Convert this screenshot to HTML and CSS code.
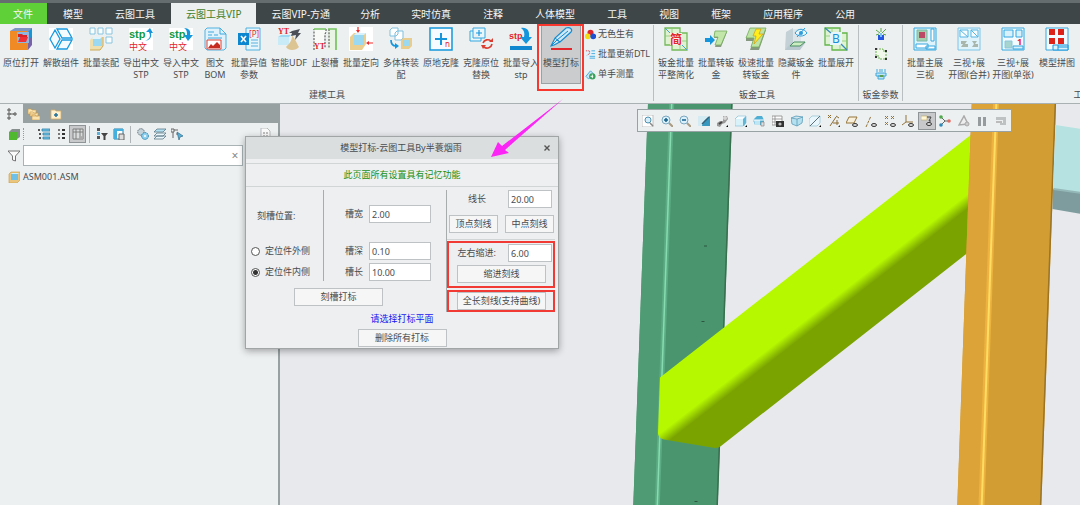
FILE: index.html
```html
<!DOCTYPE html>
<html lang="zh-CN">
<head>
<meta charset="utf-8">
<title>ASM001.ASM</title>
<link rel="stylesheet" href="styles.css">
</head>
<body>
<div class="app">
  <div class="titlebar"></div>
  <nav class="tabs">
    <button class="tab tab-file">文件</button>
    <button class="tab">模型</button>
    <button class="tab">云图工具</button>
    <button class="tab tab-active">云图工具VIP</button>
    <button class="tab tab-tight">云图VIP-方通</button>
    <button class="tab tab-tight">分析</button>
    <button class="tab">实时仿真</button>
    <button class="tab">注释</button>
    <button class="tab">人体模型</button>
    <button class="tab">工具</button>
    <button class="tab">视图</button>
    <button class="tab">框架</button>
    <button class="tab">应用程序</button>
    <button class="tab">公用</button>
  </nav>

  <div class="ribbon">
    <section class="group group-model">
      <div class="items">
        <button class="tool"><svg viewBox="0 0 24 24"><path d="M1 4l5-3h17l-4 4z" fill="#7d97c4"/><path d="M19 5l4-4v17l-4 5z" fill="#7a62a8"/><path d="M19 5l4-4v8l-4 5z" fill="#1596d6"/><path d="M1 4h18v19H1z" fill="#f08a24"/><path d="M8 5h12v11H8z" fill="#8fb8e0"/><path d="M9 7h4l1 1h4v2H9z" fill="#d8232a"/><path d="M11 10h8l-2 5H9z" fill="#ef3038"/></svg><span>原位打开</span></button>
        <button class="tool"><svg viewBox="0 0 24 24"><path fill="#fff" d="M0 1h24v22H0z"/><path d="M1 12l5-9 5 9-5 9zM8 2h10l5 9H13zM13 13h10l-5 9H8z" fill="#f4fbff" stroke="#1a9ae0" stroke-width="1.300"/></svg><span>解散组件</span></button>
        <button class="tool"><svg viewBox="0 0 24 24"><path d="M1 1h5v6H1zM9 1h5v6H9zM17 1h6v6h-6zM17 10h6v6h-6z" fill="#fafdff" stroke="#7dbfdd" stroke-width=".9"/><path d="M1 13l3-3h10v9l-3 4H1z" fill="#f0dfae"/><path d="M4 10h9v9H4z" fill="#9bd8f2"/><path d="M4 10h9l-2 2H3z" fill="#dff4fc"/><path d="M1 23h10l3-4v-9" fill="none" stroke="#cda958"/></svg><span>批量装配</span></button>
        <button class="tool"><svg viewBox="0 0 24 24"><path fill="#fff" d="M0 1h24v22H0z"/><text x="0" y="11" class="g-stp">stp</text><path d="M16 14c5-2 6-5 4-9h-3l4-4 3 5h-2c1 4-1 7-6 8z" fill="#1596dc"/><text x="0" y="23" class="g-zh">中文</text></svg><span>导出中文<br>STP</span></button>
        <button class="tool"><svg viewBox="0 0 24 24"><path fill="#fff" d="M0 1h24v22H0z"/><text x="0" y="11" class="g-stp">stp</text><path d="M15 1c5 0 7 3 6 7h3l-5 6-4-6h3c0-3 0-5-3-7z" fill="#1596dc"/><text x="0" y="23" class="g-zh">中文</text></svg><span>导入中文<br>STP</span></button>
        <button class="tool w28"><svg viewBox="0 0 24 24"><path d="M4 1h13l6 6v14l-2 2H4l-2-2V3z" fill="#dff2fb" stroke="#3fa8dc" stroke-width=".9"/><path d="M17 1v6h6M5 5h6M5 8h4M11 8h4M5 11h14" fill="none" stroke="#3fa8dc"/><path d="M4 13h14v9H4z" fill="#fff" stroke="#e04030"/><path d="M5 21l3-4 2 2 4-4 3 3v3z" fill="#c62c20"/></svg><span>图文<br>BOM</span></button>
        <button class="tool"><svg viewBox="0 0 24 24"><path d="M9 1h14v22H9z" fill="#e6f5fc" stroke="#3fa8dc" stroke-width=".9"/><path d="M14 13h7M14 16h7M14 19h7" stroke="#58b0dd"/><path d="M1 6h11v12H1z" fill="#0c86cf"/><path d="M4 9l5 6M9 9l-5 6" stroke="#fff" stroke-width="1.5"/><text x="12" y="10" class="g-red7">[P]</text></svg><span>批量异值<br>参数</span></button>
        <button class="tool"><svg viewBox="0 0 24 24"><path d="M1 10l3-2h10l-2 2v8H1z" fill="#9edaf4"/><path d="M1 10h11v8H1z" fill="#c9ebf8"/><path d="M15 9c2 0 5 8 7 11-3 4-11 4-13 0 3-3 6-6 6-11z" fill="#dcc493"/><path d="M15 4l8-2-2 4h3l-6 7 1-5-5 1 1-3h-3z" fill="#4a4e57"/><text x="1" y="7" class="g-yt">YT</text></svg><span>智能UDF</span></button>
        <button class="tool w32"><svg viewBox="0 0 24 24"><path d="M1 2h12v3l-2 2v13l2 2H1z" fill="#f7faf7"/><path d="M14 2h9v21h-9l1-2V7l-1-2z" fill="#e9f4e5"/><path d="M1 23V2M13 2v3l-1 2v14M16 2v19" fill="none" stroke="#444" stroke-dasharray="2 1.3"/><path d="M1 2h12M15 2h8v21" fill="none" stroke="#76c461" stroke-width="1.7"/><text x="1" y="22" class="g-yt">YT</text></svg><span>止裂槽</span></button>
        <button class="tool"><svg viewBox="0 0 24 24"><path fill="#fff" d="M0 0h24v24H0z"/><path d="M1 10l4-4h12v11l-4 6H1z" fill="#ebcf91"/><path d="M5 8h10v10H5z" fill="#9bd8f2"/><path d="M5 8l2-2h10l-2 2z" fill="#d9f2fb"/><path d="M9 0v5M24 16h-5" stroke="#ee2b2b" stroke-width="1.2"/><path d="M7 3h4L9 6zM20 14v4l-3-2z" fill="#ee2b2b"/></svg><span>批量定向</span></button>
        <button class="tool"><svg viewBox="0 0 24 24"><path d="M1 3l2-2h6v6L7 9H1zM6 6l2-2h6v7l-2 2H6z" fill="#fff" stroke="#7dbfdd"/><path d="M2 13c0 4 1 6 5 6" fill="none" stroke="#1596dc" stroke-width="1.7"/><path d="M6 16l4 3-4 3z" fill="#1596dc"/><path d="M12 13l2-2h9v8l-3 3h-8z" fill="#e8cd8e"/><path d="M14 13h7v6h-7z" fill="#9bd8f2"/></svg><span>多体转装<br>配</span></button>
        <button class="tool"><svg viewBox="0 0 24 24"><path d="M1 1h22v22H1z" fill="#f5fbff" stroke="#1596dc" stroke-width="1.5"/><path d="M6 12h12M12 6v12" stroke="#1596dc" stroke-width="2"/><text x="16" y="20" class="g-red7">n</text></svg><span>原地克隆</span></button>
        <button class="tool"><svg viewBox="0 0 24 24"><path d="M4 4H1v10h11v-3M4 1h12v10H4z" fill="#e9f7fd" stroke="#35a7df"/><path d="M7 6h6M10 3v6" stroke="#1596dc" stroke-width="1.2"/><path d="M14 16a5 5 0 0 1 8-2M23 17a5 5 0 0 1-8 3" fill="none" stroke="#dc3d31" stroke-width="1.6"/><path d="M20 15h4v-4zM12 18h5l-3 4z" fill="#dc3d31"/></svg><span>克隆原位<br>替换</span></button>
        <button class="tool"><svg viewBox="0 0 24 24"><text x="0" y="12" class="g-stp g-r">stp</text><path d="M12 1c6-1 9 3 8 9h3l-6 7-6-7h4c1-4 0-7-3-9z" fill="#1596dc"/><path d="M1 19h22v4H1z" fill="#1187d0"/></svg><span>批量导入<br>stp</span></button>
        <button class="tool tool-active"><svg viewBox="0 0 24 24"><path d="M2 19l4-8L17 1c4-1 7 1 5 4L11 15c-3 1-4 3-9 4z" fill="#cfe9f8" stroke="#168bd0" stroke-width="1.2"/><path d="M2 19l6-6 3 2M8 13L19 4M6 11l5 4" fill="none" stroke="#168bd0"/><path d="M2 22h21" stroke="#e3262c" stroke-width="2"/></svg><span>模型打标</span></button>
        <div class="mini-list">
          <button class="mini"><svg viewBox="0 0 12 12"><circle cx="6" cy="4" r="3.3" fill="#e0242a"/><circle cx="3" cy="8" r="3.2" fill="#f3dd10"/><circle cx="9" cy="8" r="3.2" fill="#2050cf"/></svg>无色生有</button>
          <button class="mini"><svg viewBox="0 0 12 12"><path d="M1 1h10v10H1z" fill="#e2f3fb"/><path d="M7 2h4M7 5h4M5 8h6M5 10h6" stroke="#45a8dc"/><path d="M1 2h4v3L2 7" fill="none" stroke="#e0242a" stroke-dasharray="1 1"/></svg>批量更新DTL</button>
          <button class="mini"><svg viewBox="0 0 12 12"><path d="M1 8l5-6 3 3-5 6z" fill="#c7e6f7" stroke="#42a6dc"/><circle cx="8" cy="8" r="3.5" fill="#38a05a"/><path d="M8 6v4M6 8h3" stroke="#fff"/></svg>单手测量</button>
        </div>
      </div>
      <h2 class="group-name">建模工具</h2>
    </section>

    <section class="group group-sheet">
      <div class="items">
        <button class="tool"><svg viewBox="0 0 24 24"><path d="M1 1h15v5h7v17H8v-5H1z" fill="#dff3d3" stroke="#73b95a" stroke-width="1.300"/><path d="M8 1v17M16 6v17M1 9h15M8 14h15" fill="none" stroke="#8cc877" stroke-width=".8"/><path d="M1 1l22 22" stroke="#4aa0d0"/><path d="M6 6h12v12H6z" fill="#f6f4ec"/><text x="6" y="17" class="g-jian">简</text></svg><span>钣金批量<br>平整简化</span></button>
        <button class="tool"><svg viewBox="0 0 24 24"><path d="M11 5h12l-6 15h-6l3-9h-4z" fill="#8a9a84"/><path d="M11 4h12l-6 14h-6l3-8h-4z" fill="#c2e6a9" stroke="#73ad5c" stroke-width=".8"/><path d="M1 11h5V8l5 5-5 5v-3H1z" fill="#1596dc"/></svg><span>批量转钣<br>金</span></button>
        <button class="tool"><svg viewBox="0 0 24 24"><path d="M6 3h16l-7 20H6l3-9H2v-3z" fill="#869880"/><path d="M6 1h16l-7 19H7l3-9H2z" fill="#bde3a5" stroke="#73ad5c" stroke-width=".8"/><path d="M12 2h5l-2 5h4l-9 10 2-8H9z" fill="#ffed1c" stroke="#d19a18" stroke-width=".7"/></svg><span>极速批量<br>转钣金</span></button>
        <button class="tool"><svg viewBox="0 0 24 24"><path d="M2 5l7-4v14l-6 8H1z" fill="#c3d0d6"/><path d="M9 2h8v13H9z" fill="#dde5e9"/><path d="M1 23l7-8h14l-6 8z" fill="#b9c8cf"/><path d="M6 19l4-4h11l-5 4z" fill="#caecc0" stroke="#4c8f66"/><path d="M11 6c3-5 9-5 12 0-3 4-9 4-12 0z" fill="#eaf7fe" stroke="#2d9cd8"/><circle cx="17" cy="6" r="2" fill="#2d9cd8"/><path d="M13 10l8-9" stroke="#2d9cd8"/></svg><span>隐藏钣金<br>件</span></button>
        <button class="tool"><svg viewBox="0 0 24 24"><path d="M1 1h15v5h7v17H8v-5H1z" fill="#dff3d3" stroke="#61b54a" stroke-width="1.300"/><path d="M8 1v5M16 18v5M1 9h5M18 14h5" stroke="#8cc877" stroke-width=".8"/><path d="M6 5h12v13H6z" fill="#e7f6fd"/><path d="M1 1l6 5M17 17l6 6" stroke="#3a88bc" stroke-width="1.3"/><text x="8" y="16" class="g-b">B</text></svg><span>批量展开</span></button>
      </div>
      <h2 class="group-name">钣金工具</h2>
    </section>

    <section class="group group-param">
      <div class="param-list">
        <button class="icon" aria-label="参数"><svg viewBox="0 0 12 12"><path d="M1 2l4 3M11 1L7 5M6 0v4M1 7l3-1M11 7L8 6" stroke="#5aa649"/><path d="M3 7h6v5H3z" fill="#2455e0"/><path d="M5 5h2v4H5z" fill="#78c1f0"/></svg></button>
        <button class="icon" aria-label="选择参数"><svg viewBox="0 0 12 12"><path d="M1 1h7v2h3v8H4V8H1z" fill="#f1faea" stroke="#6fb254" stroke-dasharray="2 1"/><path d="M0 0h2v2H0zM10 2h2v2h-2zM0 8h2v2H0zM10 10h2v2h-2z" fill="#333"/></svg></button>
        <button class="icon" aria-label="参数表"><svg viewBox="0 0 12 12"><path d="M1 5h10v3H1zM3 8h6v3H3z" fill="#bfe4f6" stroke="#3fa8dc"/><path d="M2 1v3M5 1v3M7 1v3M10 1v3" stroke="#3fa8dc"/><path d="M5 7h3v2H5z" fill="#5b9f4f"/></svg></button>
      </div>
      <h2 class="group-name">钣金参数</h2>
    </section>

    <section class="group group-draw">
      <div class="items">
        <button class="tool w44"><svg viewBox="0 0 24 24"><path d="M1 1h22v22H1z" fill="#dff3fc" stroke="#35a7df"/><path d="M4 3h10v11H4z" fill="#a6cfae" stroke="#7ba"/><path d="M6 5h6v6H6z" fill="#bb4a66"/><path d="M18 2h3v12h-3zM3 17h12v4H3zM13 19h9v3h-9z" fill="#fff" stroke="#35a7df"/></svg><span>批量主展<br>三视</span></button>
        <button class="tool w44"><svg viewBox="0 0 24 24"><path d="M1 1h22v22H1z" fill="#dff3fc" stroke="#7cc4e6"/><path d="M3 3h8v7H3zM14 3h7v7h-7z" fill="#f6fcff" stroke="#58b5e0"/><path d="M3 3l8 7M14 3l7 7" stroke="#58b5e0"/><path d="M4 14h6l-2 3h3v3H4l2-3H4zM15 14h5l-2 3h3v3h-6l2-3z" fill="#a9b6ab"/></svg><span>三视+展<br>开图(合并)</span></button>
        <button class="tool w44"><svg viewBox="0 0 24 24"><path d="M1 1h22v22H1z" fill="#f2fbff" stroke="#35a7df"/><path d="M3 3h9v7H3zM15 3h6v7h-6zM12 19h10v3H12z" fill="#d9f1fb" stroke="#35a7df"/><path d="M4 14h7v7H4z" fill="#a6d4cf" stroke="#8cc6dd"/><text x="16" y="18" class="g-one">1</text></svg><span>三视+展<br>开图(单张)</span></button>
        <button class="tool w44"><svg viewBox="0 0 24 24"><path d="M1 1h22v22H1z" fill="#f2fbff" stroke="#35a7df"/><path d="M4 2h6v6H4zM13 2h6v6h-6zM4 11h6v6H4zM13 11h6v6h-6z" fill="#dd2219"/><path d="M8 18h15v5H8zM13 18v5M13 20h10" fill="#d9f1fb" stroke="#1596dc"/></svg><span>模型拼图</span></button>
      </div>
      <h2 class="group-name">工具</h2>
    </section>
  </div>

  <main class="workspace">
    <aside class="sidebar">
      <div class="side-tabs">
        <button class="side-tab side-tab-active" aria-label="模型树"><svg viewBox="0 0 12 12" fill="none" stroke="#555"><path d="M2 1h2v2H2zM2 5h2v2H2zM2 9h2v2H2zM4 6h4M8 5h2v2H8z"/></svg></button>
        <button class="side-tab" aria-label="文件夹"><svg viewBox="0 0 12 12"><path d="M0 1h3l1 1h4v4H0zM2 4h3l1 1h4v3H2zM4 7h3l1 1h4v4H4z" fill="#fbe3b0" stroke="#c99a4c" stroke-width=".6"/></svg></button>
        <button class="side-tab" aria-label="收藏夹"><svg viewBox="0 0 12 12"><path d="M1 2h4l1 1h5v8H1z" fill="#fff0cf" stroke="#d3ad6a" stroke-width=".8"/><path d="M6 5v4M4 7h4" stroke="#23719b" stroke-width="1.500"/></svg></button>
      </div>
      <div class="side-tools">
        <button class="icon i17" aria-label="模型"><svg viewBox="0 0 12 12"><path d="M1 4l3-3h8v8l-3 2z" fill="#868e8e"/><path d="M1 4h8v8H1z" fill="#50b82e"/></svg></button>
        <span class="grip"></span>
        <button class="icon i17" aria-label="展开全部"><svg viewBox="0 0 12 12"><path d="M0 1h2v2H0zM1 5h2v2H1zM1 9h2v2H1z" fill="#555"/><path d="M4 1h8v2H4zM5 5h7v2H5zM5 9h7v2H5z" fill="#79c5e6" stroke="#247ea8" stroke-width=".8"/></svg></button>
        <button class="icon i17" aria-label="折叠全部"><svg viewBox="0 0 12 12"><path d="M3 1h2v2H3zM3 5h2v2H3zM3 9h2v2H3z" fill="#777"/><path d="M7 1h3v2H7zM7 5h3v2H7zM7 9h3v2H7z" fill="#333"/></svg></button>
        <button class="icon i17 pressed" aria-label="树列"><svg viewBox="0 0 12 12"><path d="M1 1h10v10H1zM1 4h10M4 1v10M8 1v10" fill="#d9dcdd" stroke="#777" stroke-width=".9"/><circle cx="9" cy="10" r="2" fill="#aaa"/></svg></button>
        <span class="rule"></span>
        <button class="icon i17" aria-label="树过滤器"><svg viewBox="0 0 12 12"><path d="M1 0h3v3H1zM1 8h3v3H1z" fill="#555"/><path d="M1 4h3v3H1z" fill="#58b0dd"/><path d="M5 5h7L9.500 8v4h-2V8z" fill="#444"/></svg></button>
        <button class="icon i17" aria-label="列"><svg viewBox="0 0 12 12"><path d="M1 1h9v10H1z" fill="#fff" stroke="#287da4"/><path d="M1 1h3v10H1zM4 1h6v2H4z" fill="#43b0df"/><path d="M6 6h5v6H6z" fill="#ddd" stroke="#666"/></svg></button>
        <span class="rule"></span>
        <button class="icon i17" aria-label="设置"><svg viewBox="0 0 12 12"><circle cx="4" cy="4" r="3.300" fill="#c5d3d9" stroke="#60717a" stroke-dasharray="1.500 .7"/><circle cx="8" cy="8" r="3.400" fill="#8ed0ee" stroke="#2980a8" stroke-dasharray="1.500 .7"/><circle cx="8" cy="8" r="1" fill="#fff"/></svg></button>
        <button class="icon i17" aria-label="层"><svg viewBox="0 0 12 12" fill="#e9f6fb" stroke="#5b7886" stroke-width=".8"><path d="M0 11l3-3h9l-3 3zM0 8l3-3h9L9 8z"/><path d="M0 4l3-3h9L9 4z" fill="#b3e1f4"/></svg></button>
        <button class="icon i17" aria-label="选择"><svg viewBox="0 0 12 12"><path d="M0 1h3v3H0zM3 2h4M2 4v6M5 6h3" fill="none" stroke="#666"/><path d="M6 4l6 4-3 1-1 3z" fill="#56b0d9" stroke="#356c86" stroke-width=".7"/></svg></button>
        <button class="icon i17 push" aria-label="报告"><svg viewBox="0 0 12 12"><path d="M2 0h6l3 3v9H2z" fill="#fafafa" stroke="#b5b9ba"/><path d="M4 5h2M7 5h2M4 8h2M7 8h2" stroke="#aaa" stroke-width="1.500"/></svg></button>
      </div>
      <div class="search">
        <svg class="funnel" viewBox="0 0 12 12"><path d="M0 1h12L7.500 6v5l-3-1V6z" fill="#fafafa" stroke="#666" stroke-width=".9"/></svg>
        <div class="search-box"><input type="text" aria-label="搜索模型树"><button class="clear" aria-label="清除">×</button></div>
      </div>
      <div class="tree-row"><svg viewBox="0 0 12 12"><path d="M1 3l2-2h9v8l-3 3H1z" fill="#e9c57d" stroke="#c69a45" stroke-width=".6"/><path d="M3 3h7v6H3z" fill="#6fc0e8"/><path d="M3 3l1-1h7l-1 1z" fill="#cdeefb"/></svg>ASM001.ASM</div>
    </aside>

    <section class="viewport">
      <svg class="scene" viewBox="280 104 800 401" preserveAspectRatio="xMidYMid slice">
        <defs>
          <linearGradient id="lime" gradientUnits="userSpaceOnUse" x1="811" y1="316" x2="818" y2="325"><stop offset="0" stop-color="#b6f800"/><stop offset="1" stop-color="#7aa300"/></linearGradient>
        </defs>
        <path d="M648 104h84.500L717.700 505h-84.400z" fill="#4b956e"/>
        <path d="M648 104h22L655.600 505h-22.300z" fill="#4f9c74"/>
        <path d="M671.700 104L657.300 505" stroke="#5cad85" stroke-width="5"/>
        <path d="M671.700 104L657.300 505" stroke="#86dcae" stroke-width="1.500"/>
        <path d="M731.800 104L717.200 505" stroke="#38704f" stroke-width="1.500"/>
        <path d="M704 246h3M701.500 321.500h3M694.500 501.500h3" stroke="#2b553f"/>
        <path d="M972 134L660 377.500L658 433Q658 438 664 439.600L715 448Q719 448 721 446L970 251z" fill="url(#lime)"/>
        <path d="M971.700 104H1056L1041.300 505h-84z" fill="#d29e33"/>
        <path d="M971.700 104h22L979 505h-21.700z" fill="#dba338"/>
        <path d="M996 104L981.500 505" stroke="#edb23f" stroke-width="6"/>
        <path d="M996.300 104L981.700 505" stroke="#ffdc62" stroke-width="2"/>
        <path d="M1055.300 104L1040.600 505" stroke="#9c7423" stroke-width="1.500"/>
        <path d="M1055.500 125L1082 129v64l-29-4z" fill="#b6e3e1"/>
        <path d="M1053 189l29 4v21l-29.500-5z" fill="#7e9c9d"/>
        <path d="M1053.500 189l28.500 4" stroke="#94b8b8" stroke-width="2"/>
      </svg>
      <div class="view-tools">
        <button class="icon" aria-label="重新调整"><svg viewBox="0 0 12 12"><path d="M0 0h11v12H0z" fill="#fff" stroke="#aaa" stroke-width=".7"/><circle cx="6" cy="5" r="3" fill="#d4effb" stroke="#4f91ae"/><path d="M8 8l3 3" stroke="#888" stroke-width="1.500"/></svg></button>
        <button class="icon" aria-label="放大"><svg viewBox="0 0 12 12"><path d="M8 8l4 4" stroke="#a99c83" stroke-width="2"/><circle cx="5" cy="5" r="4" fill="#d9f0fb" stroke="#7ba8bf"/><path d="M3 5h4M5 3v4" stroke="#155f8c" stroke-width="1.500"/></svg></button>
        <button class="icon" aria-label="缩小"><svg viewBox="0 0 12 12"><path d="M8 8l4 4" stroke="#a99c83" stroke-width="2"/><circle cx="5" cy="5" r="4" fill="#d9f0fb" stroke="#7ba8bf"/><path d="M3 5h4" stroke="#155f8c" stroke-width="1.500"/></svg></button>
        <button class="icon" aria-label="重画"><svg viewBox="0 0 12 12"><path d="M0 1h12v10H0z" fill="#3698be"/><path d="M0 1h12C8 4 5 6 4 11H0z" fill="#d5ebf3"/><path d="M4 9l7-7" stroke="#32617a" stroke-width="1.500"/></svg></button>
        <button class="icon" aria-label="渲染"><svg viewBox="0 0 12 12"><path d="M1 11V8l3-2h3V1h4l1 3-3 4-3 1-2 3z" fill="#999"/><circle cx="9" cy="3" r="2" fill="#d6d6d6"/><path d="M3 9l3-2" stroke="#444" stroke-width="2"/><path d="M12 12h-2l2-2z"/></svg></button>
        <button class="icon" aria-label="显示样式"><svg viewBox="0 0 12 12"><path d="M0 4l3-3h8v7l-2 3H0z" fill="#60b6d6"/><path d="M0 4h8v7H0z" fill="#d9f1f9"/><path d="M0 4l3-3h8L8 4z" fill="#f6fcff"/><path d="M0 11V4l3-3h8v7l-3 3z" fill="none" stroke="#7dbcd4" stroke-width=".6"/><path d="M12 12h-2l2-2z"/></svg></button>
        <button class="icon" aria-label="已保存方向"><svg viewBox="0 0 12 12"><path d="M0 5l4-4h5l2 4v5H2z" fill="#4faed3"/><path d="M1 5h6v5H2z" fill="#bfe5f3"/><path d="M0 5h11" stroke="#fff"/><path d="M8 7h3v4H8z" fill="#ddd" stroke="#888" stroke-width=".7"/></svg></button>
        <button class="icon" aria-label="视图管理器"><svg viewBox="0 0 12 12"><path d="M0 1h10v9H0zM0 4h10M3 1v9M0 7h4" fill="#fff" stroke="#888" stroke-width=".8"/><path d="M4 6h8v6H4z" fill="#333"/><circle cx="8" cy="9" r="1.600" fill="#bbb"/></svg></button>
        <button class="icon" aria-label="透视图"><svg viewBox="0 0 12 12"><path d="M0 3l5-2 7 1-1 6-5 3-5-2zM0 3l6 1 6-2M6 4v7" fill="#b5e0f0" stroke="#5a9db9" stroke-width=".8"/></svg></button>
        <button class="icon" aria-label="截面"><svg viewBox="0 0 12 12"><path d="M0 4l3-3h8v7l-3 3H0z" fill="#e9f7fc" stroke="#8ebfd1" stroke-width=".7"/><path d="M1 11L11 1" stroke="#5d6f77"/><path d="M12 12h-2l2-2z"/></svg></button>
        <button class="icon" aria-label="基准显示过滤器"><svg viewBox="0 0 12 12" stroke="#8b6b30" fill="none"><path d="M0 0l3 3M3 0L0 3M2 11L8 2M5 8h6M9 5v5M8 1l3 2"/><path d="M12 12h-2l2-2z" fill="#333" stroke="none"/></svg></button>
        <button class="icon" aria-label="平面显示"><svg viewBox="0 0 12 12"><path d="M3 2h8L8 8H0z" fill="#f8f0da" stroke="#93743b"/><ellipse cx="9" cy="10" rx="2.500" ry="1.500" fill="#ddd" stroke="#333"/></svg></button>
        <button class="icon" aria-label="轴显示"><svg viewBox="0 0 12 12"><path d="M1 12L6 1" stroke="#93743b" stroke-dasharray="3 1"/><ellipse cx="9" cy="10" rx="2.500" ry="1.500" fill="#ddd" stroke="#333"/></svg></button>
        <button class="icon" aria-label="点显示"><svg viewBox="0 0 12 12"><path d="M1 1l3 3M4 1L1 4M7 1l3 3M10 1L7 4M1 7l3 3M4 7l-3 3" stroke="#93743b"/><ellipse cx="9" cy="10" rx="2.500" ry="1.500" fill="#ddd" stroke="#333"/></svg></button>
        <button class="icon" aria-label="坐标系显示"><svg viewBox="0 0 12 12"><path d="M4 0v7L0 10M4 7h7" stroke="#93743b" fill="none"/><ellipse cx="9" cy="10" rx="2.500" ry="1.500" fill="#ddd" stroke="#333"/></svg></button>
        <button class="icon pressed" aria-label="注释显示"><svg viewBox="0 0 12 12"><path d="M0 1h6v4H0z" fill="#fff6d5" stroke="#bba468" stroke-width=".6"/><path d="M6 2h4L8 6h2" stroke="#444" fill="none"/><ellipse cx="8" cy="9" rx="2.500" ry="1.500" fill="#ddd" stroke="#333"/></svg></button>
        <button class="icon" aria-label="旋转中心"><svg viewBox="0 0 12 12"><path d="M2 2l4 4h4M6 6l-4 4" stroke="#666" fill="none"/><circle cx="2" cy="2" r="1.800" fill="#4fa84b"/><circle cx="10" cy="6" r="1.800" fill="#e06d65"/><circle cx="2" cy="10" r="1.800" fill="#3189b8"/></svg></button>
        <button class="icon" aria-label="仿真"><svg viewBox="0 0 12 12"><path d="M1 10l5-9 4 8z" fill="#eee" stroke="#aaa" stroke-width="1.500"/><circle cx="9" cy="9" r="2" fill="#ccc" stroke="#aaa"/></svg></button>
        <button class="icon" aria-label="暂停"><svg viewBox="0 0 12 12"><path d="M2 2h3v9H2zM7 2h3v9H7z" fill="#969b9d"/></svg></button>
        <button class="icon" aria-label="恢复"><svg viewBox="0 0 12 12"><path d="M1 2h10v8H5V8h3V5H1z" fill="#bfc2c3"/><path d="M1 7h6" stroke="#aaa" stroke-width="1.500"/></svg></button>
      </div>
    </section>
  </main>

  <form class="dialog">
    <header class="dialog-title"><h1>模型打标-云图工具By半蓑烟雨</h1><button type="button" class="close" aria-label="关闭"><svg viewBox="0 0 8 8"><path d="M1.500 1.500l5 5M6.500 1.500l-5 5" stroke="#555" stroke-width="1.400"/></svg></button></header>
    <p class="notice">此页面所有设置具有记忆功能</p>
    <div class="dialog-body">
      <div class="groove">
        <div class="groove-fields">
          <div class="position">
            <span class="row caption">刻槽位置:</span>
            <label class="row"><input type="radio" name="side">定位件外侧</label>
            <label class="row"><input type="radio" name="side" checked>定位件内侧</label>
          </div>
          <div class="sizes">
            <label class="row first">槽宽<input type="text" value="2.00"></label>
            <label class="row">槽深<input type="text" value="0.10"></label>
            <label class="row">槽长<input type="text" value="10.00"></label>
          </div>
        </div>
        <button type="button" class="btn wide center">刻槽打标</button>
      </div>
      <div class="lines">
        <label class="row line-length">线长<input type="text" value="20.00"></label>
        <div class="pair"><button type="button" class="btn">顶点刻线</button><button type="button" class="btn">中点刻线</button></div>
        <div class="marked">
          <label class="row indent">左右缩进:<input type="text" value="6.00"></label>
          <button type="button" class="btn wide">缩进刻线</button>
        </div>
        <div class="marked marked-slim"><button type="button" class="btn wide">全长刻线(支持曲线)</button></div>
      </div>
    </div>
    <p class="hint">请选择打标平面</p>
    <button type="button" class="btn wide center">删除所有打标</button>
  </form>

  <svg class="arrow" viewBox="0 0 74 60"><path d="M1 59L8 44l4 4L73 1 15 52l4 3z" fill="#fb26f5"/></svg>
</div>
</body>
</html>
```
FILE: styles.css
```css
* { box-sizing: border-box; }
body {
  margin: 0;
  font: 9px/12px "Noto Sans", "Noto Sans CJK SC", sans-serif;
  color: #484c4e;
}
button, input {
  font: inherit;
  color: inherit;
  margin: 0;
  padding: 0;
}
button {
  border: 0;
  background: none;
}
h1, h2, p { margin: 0; font-size: 9px; font-weight: 400; }
svg { display: block; }

.app {
  position: relative;
  display: flex;
  flex-direction: column;
  min-height: 100vh;
  overflow: hidden;
}
.titlebar { height: 3px; background: #656d6e; }

/* menu tabs */
.tabs { display: flex; height: 21px; background: #3f4647; }
.tab {
  padding: 0 16px;
  color: #f4f6f6;
  font-size: 10px;
  white-space: nowrap;
}
.tab-file { padding: 0 14px 0 13px; background: #5fd038; }
.tab-tight { padding: 0 15px; }
.tab-active { padding: 0 15px; background: #edf0f1; color: #458128; }

/* ribbon */
.ribbon {
  display: flex;
  height: 80px;
  padding-top: 1px;
  background: #edf0f1;
  border-bottom: 1px solid #a9b1b2;
  overflow: hidden;
}
.group {
  flex: none;
  display: flex;
  flex-direction: column;
  justify-content: space-between;
  height: 76px;
  border-right: 1px solid #b9bfc1;
}
.group-model { width: 654px; padding-left: 1px; }
.group-sheet { width: 205px; padding-left: 2px; }
.group-param { width: 44px; }
.group-draw { width: 360px; }
.items { display: flex; }
.group-name { text-align: center; }
.tool {
  position: relative;
  flex: none;
  display: flex;
  flex-direction: column;
  align-items: center;
  gap: 6px;
  width: 40px;
  height: 59px;
  padding-top: 2px;
  white-space: nowrap;
}
.tool svg { width: 24px; height: 24px; overflow: visible; }
.w28 { width: 28px; }
.w32 { width: 32px; }
.w44 { width: 44px; }
.tool-active {
  background: #cbcccd;
  border: 1px solid #9da1a3;
  border-top: 0;
}
.tool-active::after {
  content: "";
  position: absolute;
  inset: -1px -4px -8px -5px;
  border: 2px solid #f8372f;
}
.mini-list { display: flex; flex-direction: column; gap: 8px; padding: 3px 0 0 4px; }
.mini { display: flex; align-items: center; gap: 2px; height: 12px; white-space: nowrap; }
.mini svg { width: 11px; height: 11px; }
.param-list { display: flex; flex-direction: column; align-items: center; gap: 2px; }
.icon {
  flex: none;
  display: flex;
  align-items: center;
  justify-content: center;
  width: 18px;
  height: 18px;
}
.icon svg { width: 12px; height: 12px; }
.i17 { width: 17px; }
.pressed { background: #c7c9cb; border: 1px solid #8f9496; }

.g-stp { font: 700 11px "Liberation Sans", sans-serif; fill: #109a43; }
.g-r { font-size: 9px; fill: #e3262c; }
.g-zh { font: 9px "Noto Sans CJK SC", sans-serif; fill: #e3262c; }
.g-red7 { font: 8px "Noto Sans", sans-serif; fill: #e3262c; }
.g-yt { font: 700 8px "Liberation Serif", serif; fill: #e3262c; }
.g-jian { font: 700 12px "Noto Sans CJK SC", sans-serif; fill: #e3262c; }
.g-b { font: 12px "Noto Sans", sans-serif; fill: #1c8fd2; }
.g-one { font: 700 9px "Noto Sans", sans-serif; fill: #e3262c; }

/* workspace */
.workspace { flex: 1; display: flex; background: #e8e9ed; }
.sidebar {
  flex: none;
  width: 280px;
  background: #edf0f1;
  border-right: 2px solid #98a1a2;
}
.side-tabs { display: flex; height: 19px; background: #98a1a2; }
.side-tab { display: flex; align-items: center; justify-content: center; width: 22px; }
.side-tab svg { width: 12px; height: 12px; }
.side-tab-active { width: 23px; background: #edf0f1; }
.side-tools { display: flex; align-items: center; height: 22px; padding: 0 5px; }
.grip {
  height: 12px;
  margin: 0 11px 0 1px;
  border-left: 1px dotted #999;
}
.rule { height: 17px; margin: 0 3px; border-left: 1px solid #b0b6b8; }
.push { margin-left: auto; }
.search { display: flex; align-items: center; padding-left: 8px; gap: 3px; }
.funnel { width: 12px; height: 12px; }
.search-box {
  display: flex;
  width: 220px;
  height: 21px;
  background: #fff;
  border: 1px solid #a9b3b5;
}
.search-box input { flex: 1; min-width: 0; border: 0; background: none; outline: 0; }
.clear { width: 14px; color: #888; font-size: 12px; }
.tree-row {
  display: flex;
  align-items: center;
  gap: 3px;
  padding: 5px 8px;
}
.tree-row svg { width: 12px; height: 12px; }

.viewport { position: relative; flex: 1; }
.scene { position: absolute; width: 100%; height: 100%; }
.view-tools {
  position: absolute;
  top: 5px;
  left: 357px;
  display: flex;
  align-items: center;
  justify-content: space-between;
  width: 375px;
  height: 23px;
  padding: 0 1px;
  background: #edf0f1;
  border: 1px solid #98a1a3;
}

/* dialog */
.dialog {
  position: absolute;
  top: 136px;
  left: 245px;
  width: 314px;
  padding-bottom: 1px;
  background: #eeeff1;
  border: 1px solid #a2a5a6;
  box-shadow: 0 2px 7px #0005;
}
.dialog-title {
  display: flex;
  align-items: center;
  height: 22px;
  padding-left: 20px;
  background: #dadedf;
}
.dialog-title h1 { flex: 1; text-align: center; }
.close { width: 22px; padding: 7px; }
.close svg { width: 8px; height: 8px; }
.notice {
  margin-top: 4px;
  padding: 5px 0;
  border: solid #d2d5d6;
  border-width: 1px 0;
  text-align: center;
  color: #158f15;
}
.dialog-body { display: flex; padding-top: 3px; }
.groove { width: 200px; }
.groove-fields { display: flex; margin-bottom: 7px; }
.position { width: 78px; padding-left: 5px; border-right: 1px solid #a9acad; }
.sizes { padding-left: 21px; }
.row { display: flex; align-items: center; height: 18px; margin-top: 3px; white-space: nowrap; }
.first { margin: 15px 0 19px; }
.caption { margin: 17px 0; padding-left: 6px; }
input[type="radio"] {
  appearance: none;
  width: 9px;
  height: 9px;
  margin-right: 5px;
  border: 1px solid #555;
  border-radius: 50%;
  background: #fff;
}
input[type="radio"]:checked { background: radial-gradient(#333 0 2px, #fff 3px); }
.row input[type="text"] {
  width: 62px;
  height: 18px;
  margin-left: 6px;
  padding: 0 2px;
  background: #fff;
  border: 1px solid #bfc2c4;
}
.lines { flex: 1; padding-right: 3px; border-left: 1px solid #a9acad; }
.lines .row { justify-content: flex-end; margin: 0; padding-right: 3px; }
.lines .row input { width: 44px; }
.lines .line-length input { margin-left: 22px; }
.lines .indent { padding-right: 1px; }
.lines .indent input { margin-left: 12px; }
.btn {
  height: 18px;
  background: #f6f6f7;
  border: 1px solid #bfc2c4;
  white-space: nowrap;
}
.wide { display: block; width: 89px; }
.center { margin: 0 auto; }
.groove .center { margin-left: 48px; }
.pair { display: flex; justify-content: space-between; padding: 7px 1px 6px 2px; border-bottom: 1px solid #d2d5d6; }
.pair .btn { width: 49px; }
.marked { margin-top: 1px; padding: 1px 0 3px; border: 2px solid #f03a33; }
.marked .wide { margin: 3px 0 0 8px; }
.marked-slim { margin-top: 2px; padding: 0; }
.marked-slim .wide { margin-top: 0; }
.hint { padding: 1px 0 4px; text-align: center; color: #1515f0; }

.arrow {
  position: absolute;
  top: 98px;
  left: 490px;
  width: 74px;
  height: 60px;
}
```
